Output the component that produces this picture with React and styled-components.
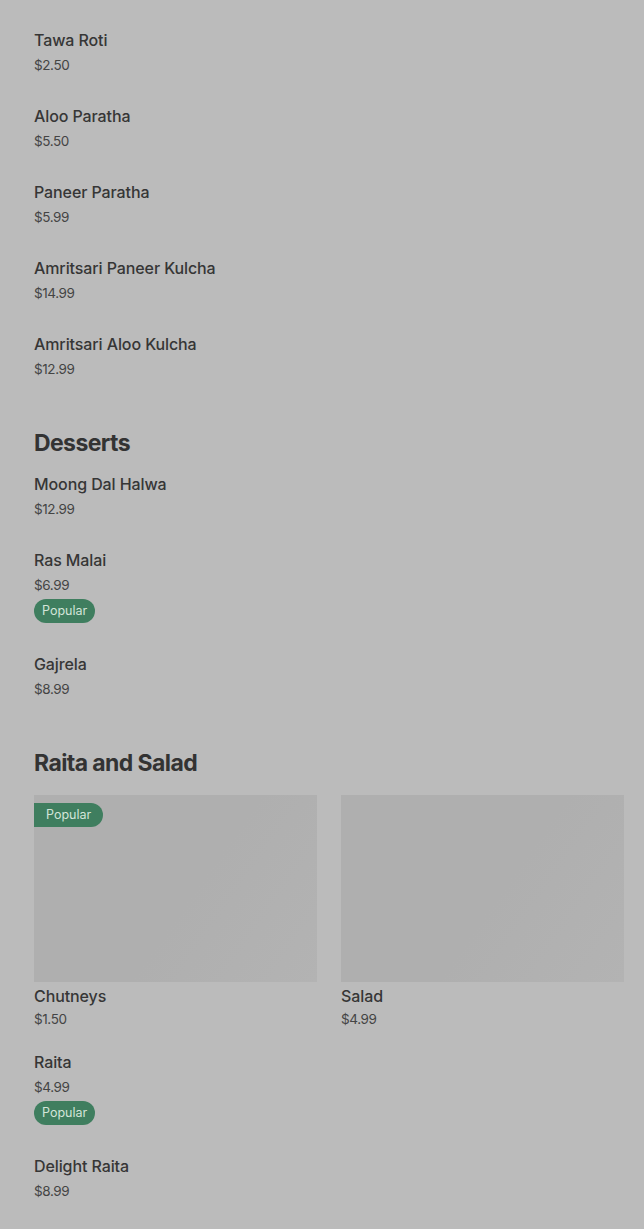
import React from 'react';
import styled, { createGlobalStyle } from 'styled-components';

const Global = createGlobalStyle`
    html, body {
        margin: 0;
        padding: 0;
        background: #bbbbbb;
    }
    body {
        font-family: Inter, "Noto Sans", sans-serif;
        color: #333333;
    }
`;

const Page = styled.div`
    padding: 29px 20px 30px 34px;
`;

const Section = styled.section`
    margin-bottom: 48px;
`;

const Heading = styled.h2`
    margin: 0 0 ${p => p.$gap || 14}px 0;
    font-size: 23px;
    line-height: 32px;
    font-weight: 700;
    letter-spacing: -0.6px;
    color: #333333;
`;

const List = styled.div`
    display: flex;
    flex-direction: column;
    gap: 30px;
`;

const Item = styled.div`
    display: flex;
    flex-direction: column;
    align-items: flex-start;
`;

const Name = styled.div`
    font-size: 16px;
    line-height: 22px;
    font-weight: 500;
    color: #363636;
    letter-spacing: -0.1px;
`;

const Price = styled.div`
    margin-top: ${p => p.$top ?? 4}px;
    font-size: 13.5px;
    line-height: 20px;
    color: #444444;
    letter-spacing: -0.4px;
`;

const Badge = styled.span`
    display: inline-block;
    margin-top: 4px;
    height: 24px;
    line-height: 24px;
    padding: 0 8px;
    border-radius: 12px;
    background: #3f7e5f;
    color: #d3e5d9;
    font-size: 12.5px;
`;

const Grid = styled.div`
    display: grid;
    grid-template-columns: 1fr 1fr;
    column-gap: 24px;
    margin-bottom: 22px;
`;

const Card = styled.div`
    display: flex;
    flex-direction: column;
`;

const Photo = styled.div`
    position: relative;
    height: 187px;
    background: linear-gradient(125deg, #afafaf 0%, #afafaf 55%, #b3b3b3 100%);
    margin-bottom: 3px;
`;

const PhotoBadge = styled.span`
    position: absolute;
    top: 8px;
    left: 0;
    height: 24px;
    line-height: 24px;
    padding: 0 12px;
    border-radius: 0 12px 12px 0;
    background: #3f7e5f;
    color: #d3e5d9;
    font-size: 12.5px;
`;

const breads = [
    { name: 'Tawa Roti', price: '$2.50' },
    { name: 'Aloo Paratha', price: '$5.50' },
    { name: 'Paneer Paratha', price: '$5.99' },
    { name: 'Amritsari Paneer Kulcha', price: '$14.99' },
    { name: 'Amritsari Aloo Kulcha', price: '$12.99' },
];

const desserts = [
    { name: 'Moong Dal Halwa', price: '$12.99' },
    { name: 'Ras Malai', price: '$6.99', popular: true },
    { name: 'Gajrela', price: '$8.99' },
];

const featured = [
    { name: 'Chutneys', price: '$1.50', popular: true },
    { name: 'Salad', price: '$4.99' },
];

const raita = [
    { name: 'Raita', price: '$4.99', popular: true },
    { name: 'Delight Raita', price: '$8.99' },
];

function MenuList({ items }) {
    return (
        <List>
            {items.map(it => (
                <Item key={it.name}>
                    <Name>{it.name}</Name>
                    <Price>{it.price}</Price>
                    {it.popular && <Badge>Popular</Badge>}
                </Item>
            ))}
        </List>
    );
}

export default function App() {
    return (
        <Page>
            <Global />
            <Section>
                <MenuList items={breads} />
            </Section>

            <Section>
                <Heading>Desserts</Heading>
                <MenuList items={desserts} />
            </Section>

            <Section>
                <Heading $gap={16}>Raita and Salad</Heading>
                <Grid>
                    {featured.map(it => (
                        <Card key={it.name}>
                            <Photo>
                                {it.popular && <PhotoBadge>Popular</PhotoBadge>}
                            </Photo>
                            <Name>{it.name}</Name>
                            <Price $top={2}>{it.price}</Price>
                        </Card>
                    ))}
                </Grid>
                <MenuList items={raita} />
            </Section>
        </Page>
    );
}
